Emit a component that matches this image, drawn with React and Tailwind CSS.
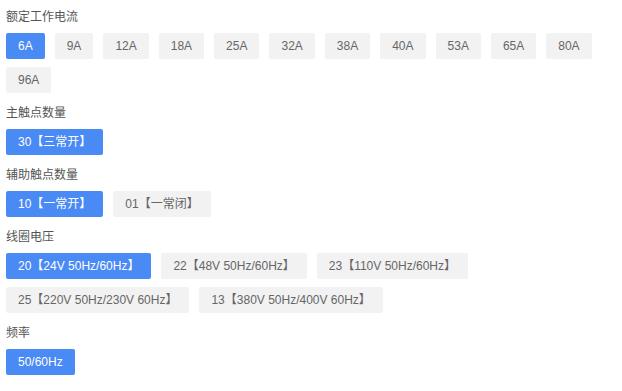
import { useState } from 'react';

const groups = [
  {
    label: '额定工作电流',
    options: ['6A', '9A', '12A', '18A', '25A', '32A', '38A', '40A', '53A', '65A', '80A', '96A'],
  },
  { label: '主触点数量', options: ['30【三常开】'] },
  { label: '辅助触点数量', options: ['10【一常开】', '01【一常闭】'] },
  {
    label: '线圈电压',
    options: [
      '20【24V 50Hz/60Hz】',
      '22【48V 50Hz/60Hz】',
      '23【110V 50Hz/60Hz】',
      '25【220V 50Hz/230V 60Hz】',
      '13【380V 50Hz/400V 60Hz】',
    ],
  },
  { label: '频率', options: ['50/60Hz'] },
];

const App = () => {
  const [selected, setSelected] = useState(() => groups.map(g => g.options[0]));

  const pick = (gi, opt) => {
    const next = [...selected];
    next[gi] = opt;
    setSelected(next);
  };

  return (
    <div
      className="w-[622px] h-[391px] bg-white pl-[6px] pr-[6px] pt-[7px]"
      style={{ fontFamily: '"Liberation Sans", Arial, "Noto Sans CJK SC", sans-serif' }}
    >
      {groups.map((group, gi) => (
        <div key={group.label} className={gi > 0 ? 'mt-[10px]' : ''}>
          <div className="text-[12px] leading-[20px] text-[#555] mb-[6px]">{group.label}</div>
          <div className="flex flex-wrap gap-x-[10px] gap-y-[8px]">
            {group.options.map(opt => {
              const active = selected[gi] === opt;
              return (
                <button
                  key={opt}
                  onClick={() => pick(gi, opt)}
                  className={`h-[26px] px-3 text-[12px] leading-[26px] rounded-[2px] whitespace-nowrap ${
                    active ? 'bg-[#4a8af4] text-white' : 'bg-[#f2f2f2] text-[#666]'
                  }`}
                >
                  {opt}
                </button>
              );
            })}
          </div>
        </div>
      ))}
    </div>
  );
};

export default App;
